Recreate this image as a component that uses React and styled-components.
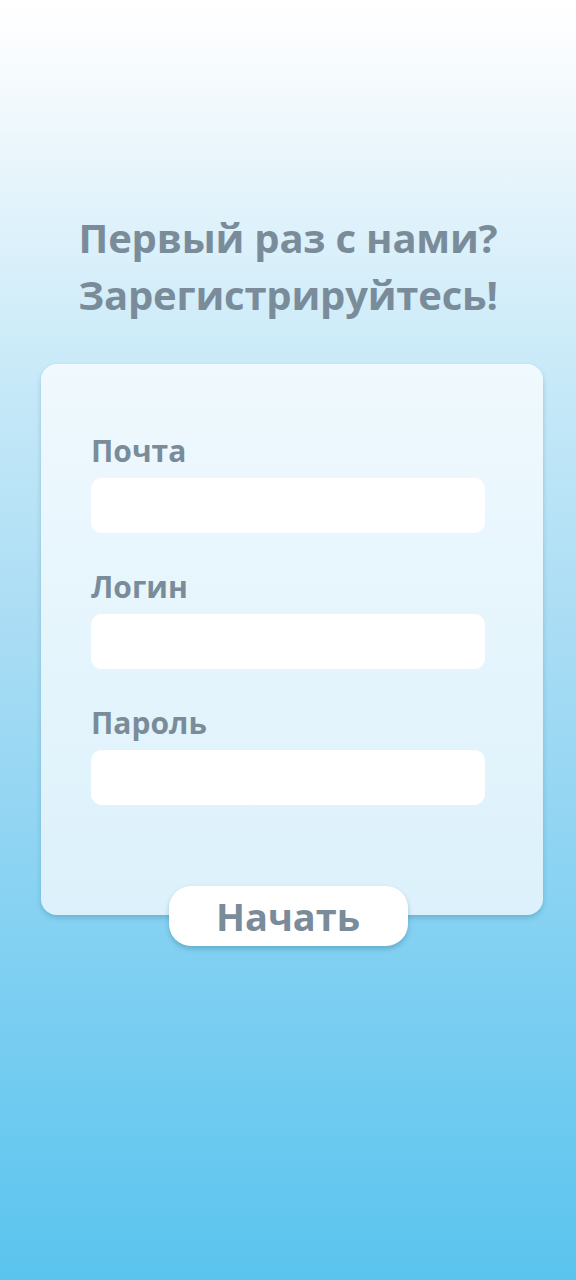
import React from 'react';
import styled, { createGlobalStyle } from 'styled-components';

const GlobalStyle = createGlobalStyle`
  * {
    box-sizing: border-box;
  }

  body {
    margin: 0;
    font-family: "Open Sans", "Noto Sans", sans-serif;
  }
`;

const fields = ['Почта', 'Логин', 'Пароль'];

const App = () => {
  return (
    <Page>
      <GlobalStyle />
      <Title>
        Первый раз с нами?
        <br />
        Зарегистрируйтесь!
      </Title>
      <Card>
        {fields.map((name) => (
          <Field key={name}>
            <Label>{name}</Label>
            <Input type={name === 'Пароль' ? 'password' : 'text'} />
          </Field>
        ))}
      </Card>
      <StartButton>Начать</StartButton>
    </Page>
  );
};

const Page = styled.div`
  min-height: 1280px;
  display: flex;
  flex-direction: column;
  align-items: center;
  padding-top: 209px;
  background: linear-gradient(
    180deg,
    #ffffff 0px,
    #fbfdff 40px,
    #eaf6fc 150px,
    #c4e8f8 400px,
    #a8dcf4 640px,
    #80d0f2 960px,
    #5ac4ee 1280px
  );
`;

const Title = styled.h1`
  margin: 0;
  font-size: 40px;
  line-height: 57px;
  font-weight: 700;
  letter-spacing: -0.2px;
  color: #7a8c99;
  text-align: center;
`;

const Card = styled.div`
  align-self: flex-start;
  margin: 41px 0 0 41px;
  width: 502px;
  padding: 69px 58px 110px 50px;
  display: flex;
  flex-direction: column;
  gap: 36px;
  border-radius: 16px;
  background: linear-gradient(180deg, #eff9fe 0%, #dcf1fb 100%);
  box-shadow: 0 3px 5px rgba(40, 90, 120, 0.25);
`;

const Field = styled.div`
  display: flex;
  flex-direction: column;
  gap: 9px;
`;

const Label = styled.label`
  font-size: 30px;
  line-height: 36px;
  font-weight: 700;
  color: #7a8c99;
`;

const Input = styled.input`
  height: 55px;
  border: none;
  border-radius: 11px;
  background: #ffffff;
  outline: none;
  padding: 0 16px;
  font: inherit;
  font-size: 22px;
  color: #5b6b77;
`;

const StartButton = styled.button`
  position: relative;
  margin-top: -29px;
  width: 239px;
  height: 60px;
  border: none;
  border-radius: 22px;
  background: #ffffff;
  box-shadow: 0 3px 5px rgba(40, 90, 120, 0.3);
  font-family: "Open Sans", "Noto Sans", sans-serif;
  font-size: 38px;
  line-height: 58px;
  font-weight: 700;
  color: #7a8c99;
  cursor: pointer;
  padding: 0;
`;

export default App;
